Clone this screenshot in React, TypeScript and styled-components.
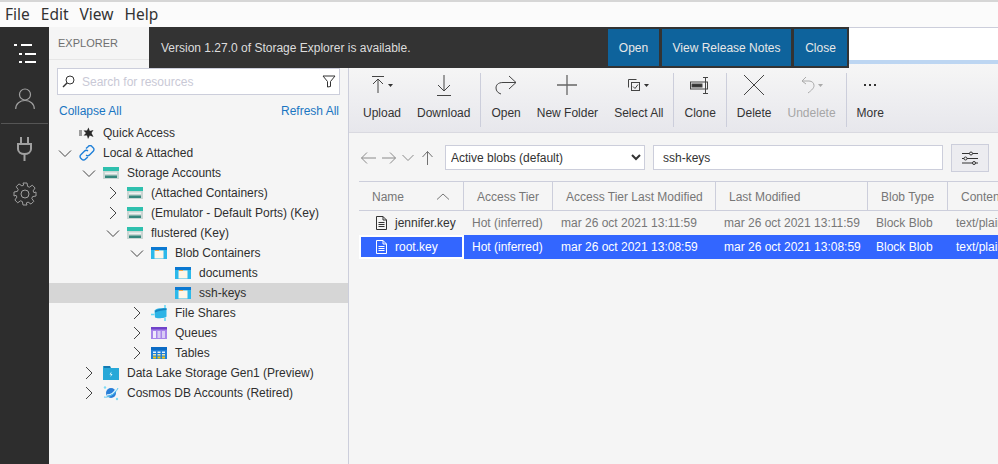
import React from "react";
import styled, { createGlobalStyle } from "styled-components";

const GlobalStyle = createGlobalStyle`
  html, body { margin: 0; padding: 0; height: 100%; overflow: hidden; }
  body { font-family: "Liberation Sans", Arial, sans-serif; font-size: 12px; color: #333; background: #f5f5f5; }
  #root { height: 100%; }
  * { box-sizing: border-box; }
`;

const COLS = "105px 89px 163px 152px 80px 120px";

const Shell = styled.div`
  width: 998px;
  height: 464px;
  position: relative;
  overflow: hidden;
  display: flex;
  flex-direction: column;
`;
const MenuBar = styled.div`
  height: 27px;
  flex: none;
  background: #fbfbfb;
  border-top: 2px solid #d6d6d6;
  display: flex;
  align-items: center;
  padding: 0 5px 1px;
  gap: 11px;
  font-family: "Noto Sans", "Open Sans", sans-serif;
  font-size: 15.5px;
  color: #333;
`;
const Body = styled.div`
  flex: 1;
  display: flex;
  min-height: 0;
`;
const ActivityBar = styled.div`
  width: 49px;
  flex: none;
  background: #2d2d2d;
  display: flex;
  flex-direction: column;
  align-items: center;
`;
const ActivitySlot = styled.div<{ $h: number }>`
  height: ${(p) => p.$h}px;
  width: 100%;
  flex: none;
  display: flex;
  align-items: center;
  justify-content: center;
`;
const ActivityRule = styled.div`
  width: 47px;
  height: 1px;
  background: #555;
  flex: none;
`;
const Explorer = styled.div`
  width: 300px;
  flex: none;
  background: #f5f5f5;
  border-right: 1px solid #cccedb;
  display: flex;
  flex-direction: column;
`;
const ExplorerTitle = styled.div`
  height: 33px;
  flex: none;
  padding: 0 0 0 9px;
  display: flex;
  align-items: center;
  font-size: 11px;
  color: #6f6f6f;
  border-bottom: 1px solid #e6e6e6;
`;
const SearchBox = styled.div`
  margin: 8px 8px 0;
  height: 27px;
  background: #fff;
  border: 1px solid #cccedb;
  display: flex;
  align-items: center;
  padding: 0 3px 0 4px;
  gap: 7px;
`;
const SearchText = styled.div`
  flex: 1;
  color: #c9c9d6;
  font-size: 12px;
`;
const LinkRow = styled.div`
  display: flex;
  justify-content: space-between;
  padding: 4px 9px 0 10px;
  height: 28px;
  align-items: center;
  color: #1a76c2;
`;
const Row = styled.div<{ $depth: number; $active?: boolean }>`
  height: 20px;
  display: flex;
  align-items: center;
  padding-left: ${(p) => 8 + p.$depth * 24}px;
  background: ${(p) => (p.$active ? "#d6d6d6" : "transparent")};
  color: #2f2f2f;
  white-space: nowrap;
`;
const Twist = styled.div`
  width: 22px;
  flex: none;
  display: flex;
  align-items: center;
  padding-left: 1px;
`;
const RowIcon = styled.div`
  width: 16px;
  height: 16px;
  flex: none;
  margin-right: 8px;
  display: flex;
`;
const Main = styled.div`
  flex: 1;
  min-width: 0;
  display: flex;
  flex-direction: column;
`;
const TabStrip = styled.div`
  height: 37px;
  flex: none;
  background: #fff;
  border-top: 1px solid #cccedb;
  border-bottom: 4px solid #bdd6f2;
`;
const Toolbar = styled.div`
  height: 69px;
  flex: none;
  background: linear-gradient(#f6f6f6, #e7e7ec);
  border-bottom: 1px solid #d9d9e0;
  padding: 4px 0 0 6px;
  display: flex;
`;
const ToolButton = styled.div<{ $off?: boolean }>`
  padding: 0 8px;
  height: 64px;
  display: flex;
  flex-direction: column;
  align-items: center;
  white-space: nowrap;
  color: ${(p) => (p.$off ? "#a6a6a6" : "#333")};
`;
const ToolIcon = styled.div`
  height: 34px;
  margin-bottom: 4px;
  display: flex;
  align-items: center;
  justify-content: center;
`;
const ToolSep = styled.div`
  width: 1px;
  height: 54px;
  margin: 5px 2px 0;
  background: #cccedb;
  flex: none;
`;
const AddressBar = styled.div`
  height: 48px;
  flex: none;
  display: flex;
  align-items: center;
  padding: 1px 9px 0 10px;
`;
const NavArrows = styled.div`
  width: 86px;
  flex: none;
  display: flex;
  align-items: center;
  gap: 6px;
  padding-left: 2px;

  svg:last-child {
    margin-left: 2px;
  }
`;
const FilterSelect = styled.select`
  width: 200px;
  height: 25px;
  flex: none;
  border: 1px solid #cccedb;
  border-radius: 0;
  background: #fff;
  color: #333;
  font: 12px "Liberation Sans", Arial, sans-serif;
  padding: 0 0 0 1px;
  margin-right: 8px;
  outline: none;
`;
const PathInput = styled.div`
  width: 290px;
  height: 25px;
  flex: none;
  border: 1px solid #cccedb;
  background: #fff;
  display: flex;
  align-items: center;
  padding-left: 9px;
  margin-right: 8px;
`;
const SettingsButton = styled.div`
  width: 38px;
  height: 28px;
  flex: none;
  background: #ececf0;
  border: 1px solid #cccedb;
  display: flex;
  align-items: center;
  justify-content: center;
`;
const Table = styled.div`
  margin-left: 10px;
  width: 709px;
`;
const HeaderRow = styled.div`
  display: grid;
  grid-template-columns: ${COLS};
  height: 30px;
  border-top: 1px solid #cccedb;
  border-bottom: 1px solid #cccedb;
`;
const HeaderCell = styled.div`
  display: flex;
  align-items: center;
  justify-content: space-between;
  padding: 1px 14px 0 13px;
  color: #777;
  white-space: nowrap;
  border-right: 1px solid #cccedb;
  &:last-child { border-right: none; }
`;
const DataRow = styled.div`
  display: grid;
  grid-template-columns: ${COLS};
  height: 24px;
  align-items: stretch;
`;
const NameCell = styled.div<{ $sel?: boolean }>`
  display: flex;
  align-items: center;
  padding-left: ${(p) => (p.$sel ? 14 : 16)}px;
  padding-bottom: ${(p) => (p.$sel ? 1 : 0)}px;
  gap: 7px;
  color: ${(p) => (p.$sel ? "#fff" : "#333")};
  background: ${(p) => (p.$sel ? "#3366ff" : "transparent")};
  border: ${(p) => (p.$sel ? "2px solid #fff" : "none")};
`;
const DataCell = styled.div<{ $sel?: boolean }>`
  display: flex;
  align-items: center;
  padding-left: 8px;
  white-space: nowrap;
  overflow: hidden;
  color: ${(p) => (p.$sel ? "#fff" : "#777")};
  background: ${(p) => (p.$sel ? "#3366ff" : "transparent")};
`;
const Notice = styled.div`
  position: absolute;
  left: 149px;
  top: 27px;
  width: 700px;
  height: 41px;
  background: #333;
  display: flex;
  align-items: center;
  padding: 0 2px 0 12px;
  color: #ddd;
`;
const NoticeText = styled.div`
  flex: 1;
`;
const NoticeButton = styled.div<{ $w: number }>`
  width: ${(p) => p.$w}px;
  height: 37px;
  margin-left: 3px;
  background: #0e639c;
  color: #e8e8e8;
  display: flex;
  align-items: center;
  justify-content: center;
`;

const Chevron = ({ open }: { open?: boolean }) => (
  <svg width="14" height="14" viewBox="0 0 14 14" fill="none" stroke="#444" strokeWidth="1">
    {open ? <path d="M1 4.5 7 10.5 13 4.5" /> : <path d="M4 1 10 7 4 13" />}
  </svg>
);

const StorageIcon = () => (
  <svg width="16" height="16" viewBox="0 0 16 16">
    <rect y="2" width="16" height="12" fill="#c9d6d3" />
    <rect y="2" width="16" height="4" fill="#2fc0ae" />
    <rect x="2" y="7.5" width="12" height="1.5" fill="#eef2f1" />
    <rect x="2" y="10.5" width="12" height="2.5" fill="#36877d" />
  </svg>
);
const BlobIcon = () => (
  <svg width="16" height="16" viewBox="0 0 16 16">
    <rect y="2" width="16" height="12" fill="#2cb9ea" />
    <rect y="2" width="16" height="3" fill="#0a78d1" />
    <rect x="3.5" y="5.5" width="9" height="8" fill="#fdf6e8" />
    <rect x="4" y="5" width="4" height="1" fill="#f0a347" />
  </svg>
);
const FileIcon = () => (
  <svg width="16" height="16" viewBox="0 0 16 16" fill="none">
    <path d="M3.5 5.5C5 3 12 3 15.5 3V11.5C15.5 13 6 14 4 12.5Z" fill="#2cb4e6" />
    <path d="M4 6C6 4 12 3.5 15.5 3.5V5C12 5 7 6 4 7.5Z" fill="#1784bf" />
    <path d="M14 0V3M14 13V16M0 9.5H3.5" stroke="#62d8f5" strokeWidth="1.5" />
  </svg>
);
const QueueIcon = () => (
  <svg width="16" height="16" viewBox="0 0 16 16">
    <rect y="2" width="16" height="12" fill="#a884ea" />
    <rect y="2" width="16" height="2.5" fill="#6f42c9" />
    <rect x="2" y="6" width="3" height="7" fill="#efe9fb" />
    <rect x="6.5" y="6" width="3" height="7" fill="#d9ccf5" />
    <rect x="11" y="6" width="3" height="7" fill="#d9ccf5" />
  </svg>
);
const TableIcon = () => (
  <svg width="16" height="16" viewBox="0 0 16 16">
    <rect y="2" width="16" height="12" fill="#1e7fd8" />
    <rect y="2" width="16" height="3" fill="#0a6ac4" />
    <path d="M2 6.5H5V8H2ZM6.5 6.5H9.5V8H6.5ZM11 6.5H14V8H11Z" fill="#e6f2fc" />
    <path d="M2 9H5V10.5H2ZM6.5 9H9.5V10.5H6.5ZM11 9H14V10.5H11Z" fill="#f3e6a6" />
    <path d="M2 11.5H5V13.5H2ZM6.5 11.5H9.5V13.5H6.5ZM11 11.5H14V13.5H11Z" fill="#f2c811" />
  </svg>
);
const LakeIcon = () => (
  <svg width="16" height="16" viewBox="0 0 16 16">
    <path d="M0 1H7L8 3H16V15H0Z" fill="#28a8d8" />
    <path d="M1 1H7L7.5 3H1Z" fill="#1678b0" />
    <path d="M8.5 6.5 6.5 9.5H8L7.5 12 9.5 9H8Z" fill="#e9fbff" />
  </svg>
);
const CosmosIcon = () => (
  <svg width="16" height="16" viewBox="0 0 16 16" fill="none">
    <circle cx="8" cy="8" r="5" fill="#2a7fd8" />
    <path d="M4 10C7 10 11 8 13 4" stroke="#d8f2ff" strokeWidth="1.3" />
    <path d="M1 12C4 13 12 10 15 3" stroke="#56c8f0" strokeWidth="1" />
    <circle cx="2" cy="2.5" r="1.2" fill="#7edcf5" />
    <circle cx="14" cy="14" r="1.2" fill="#7edcf5" />
  </svg>
);
const LinkIcon = () => (
  <svg width="16" height="16" viewBox="0 0 16 16" fill="none" stroke="#1e7fd8" strokeWidth="1.4">
    <path d="M7 3.5 9.3 1.4a2.4 2.4 0 0 1 3.6 0l1.3 1.3a2.4 2.4 0 0 1 0 3.5L10.5 10a2.4 2.4 0 0 1-3.4 0" />
    <path d="M9 6a2.4 2.4 0 0 0-3.4 0L1.8 9.8a2.4 2.4 0 0 0 0 3.5l1 1a2.4 2.4 0 0 0 3.5 0L8.8 12" />
  </svg>
);
const QuickIcon = () => (
  <svg width="16" height="16" viewBox="0 0 16 16">
    <path d="M0 6H3M0 8H3M0 10H3" stroke="#444" strokeWidth="1" />
    <path d="M9.5 2.5 10.8 6 14.5 5 12.5 8 14.5 12 10.8 10.5 9 14 8 10.5 4.5 10.5 7 8 4.5 5.5 8 5.5Z" fill="#2a2a2a" />
  </svg>
);

const Caret = () => (
  <svg width="5" height="3" viewBox="0 0 5 3" style={{ marginLeft: 4 }}>
    <path d="M0 0H5L2.5 3Z" fill="#333" />
  </svg>
);

const DocIcon = ({ color }: { color: string }) => (
  <svg width="13" height="16" viewBox="0 0 13 16" fill="none" stroke={color} strokeWidth="1">
    <path d="M1.5 1.5H8L11.5 5V14.5H1.5Z" />
    <path d="M8 1.5V5H11.5M3.5 7.5H9.5M3.5 9.5H9.5M3.5 11.5H9.5" />
  </svg>
);

type TreeItem = {
  depth: number;
  label: string;
  icon: React.ReactNode;
  twist?: "open" | "closed";
  active?: boolean;
};

const TREE: TreeItem[] = [
  { depth: 0, label: "Quick Access", icon: <QuickIcon /> },
  { depth: 0, label: "Local & Attached", icon: <LinkIcon />, twist: "open" },
  { depth: 1, label: "Storage Accounts", icon: <StorageIcon />, twist: "open" },
  { depth: 2, label: "(Attached Containers)", icon: <StorageIcon />, twist: "closed" },
  { depth: 2, label: "(Emulator - Default Ports) (Key)", icon: <StorageIcon />, twist: "closed" },
  { depth: 2, label: "flustered (Key)", icon: <StorageIcon />, twist: "open" },
  { depth: 3, label: "Blob Containers", icon: <BlobIcon />, twist: "open" },
  { depth: 4, label: "documents", icon: <BlobIcon /> },
  { depth: 4, label: "ssh-keys", icon: <BlobIcon />, active: true },
  { depth: 3, label: "File Shares", icon: <FileIcon />, twist: "closed" },
  { depth: 3, label: "Queues", icon: <QueueIcon />, twist: "closed" },
  { depth: 3, label: "Tables", icon: <TableIcon />, twist: "closed" },
  { depth: 1, label: "Data Lake Storage Gen1 (Preview)", icon: <LakeIcon />, twist: "closed" },
  { depth: 1, label: "Cosmos DB Accounts (Retired)", icon: <CosmosIcon />, twist: "closed" },
];

const BLOBS = [
  { name: "jennifer.key", date: "mar 26 oct 2021 13:11:59" },
  { name: "root.key", date: "mar 26 oct 2021 13:08:59", selected: true },
];

const thin = { fill: "none", stroke: "#444", strokeWidth: 1 };

const App = () => {
  return (
    <Shell>
      <GlobalStyle />
      <MenuBar>
        <span>File</span>
        <span>Edit</span>
        <span>View</span>
        <span>Help</span>
      </MenuBar>
      <Body>
        <ActivityBar>
          <ActivitySlot $h={54}>
            <svg width="24" height="24" viewBox="0 0 24 24" fill="#fff">
              <rect x="1" y="2" width="3" height="2" />
              <rect x="8" y="2" width="11" height="2" />
              <rect x="6" y="11" width="3" height="2" />
              <rect x="12" y="11" width="11" height="2" />
              <rect x="6" y="19" width="3" height="2" />
              <rect x="12" y="19" width="11" height="2" />
            </svg>
          </ActivitySlot>
          <ActivitySlot $h={34}>
            <svg width="20" height="21" viewBox="0 0 20 21" fill="none" stroke="#a0a0a0" strokeWidth="1.2">
              <circle cx="10" cy="6.5" r="5.5" />
              <path d="M.7 21C.7 15.5 5 12.5 10 12.5S19.3 15.5 19.3 21" />
            </svg>
          </ActivitySlot>
          <ActivitySlot $h={8} />
          <ActivityRule />
          <ActivitySlot $h={50}>
            <svg width="15" height="24" viewBox="0 0 15 24" fill="none" stroke="#a0a0a0" strokeWidth="2">
              <path d="M4 0V7M11 0V7" />
              <path d="M1 7H14V12C14 15 11 17 7.5 17S1 15 1 12Z" />
              <path d="M7.5 17V24" />
            </svg>
          </ActivitySlot>
          <ActivitySlot $h={40}>
            <svg width="24" height="24" viewBox="0 0 24 24" fill="none" stroke="#a0a0a0" strokeWidth="1">
              <circle cx="12" cy="12" r="4" />
              <path d="M10 1h4l.6 3.4 1.8.8 2.9-2 2.8 2.8-2 2.9.8 1.8L23 10v4l-3.4.6-.8 1.8 2 2.9-2.8 2.8-2.9-2-1.8.8L14 23h-4l-.6-3.4-1.8-.8-2.9 2-2.8-2.8 2-2.9-.8-1.8L1 14v-4l3.4-.6.8-1.8-2-2.9 2.8-2.8 2.9 2 1.8-.8Z" />
            </svg>
          </ActivitySlot>
        </ActivityBar>
        <Explorer>
          <ExplorerTitle>EXPLORER</ExplorerTitle>
          <SearchBox>
            <svg width="13" height="13" viewBox="0 0 13 13" fill="none" stroke="#333" strokeWidth="1">
              <circle cx="8" cy="5" r="4" />
              <path d="M5 8 1 12" strokeWidth="1.5" />
            </svg>
            <SearchText>Search for resources</SearchText>
            <svg width="14" height="13" viewBox="0 0 14 13" fill="none" stroke="#333" strokeWidth="1">
              <path d="M1 1H13L8.5 6.5V11.5L5.5 12V6.5Z" />
            </svg>
          </SearchBox>
          <LinkRow>
            <span>Collapse All</span>
            <span>Refresh All</span>
          </LinkRow>
          {TREE.map((item) => (
            <Row key={item.label} $depth={item.depth} $active={item.active}>
              <Twist>{item.twist && <Chevron open={item.twist === "open"} />}</Twist>
              <RowIcon>{item.icon}</RowIcon>
              {item.label}
            </Row>
          ))}
        </Explorer>
        <Main>
          <TabStrip />
          <Toolbar>
            <ToolButton>
              <ToolIcon>
                <svg width="12" height="18" viewBox="0 0 12 18" {...thin}>
                  <path d="M0 .5H12M6 3V17M1 8 6 3 11 8" />
                </svg>
                <Caret />
              </ToolIcon>
              Upload
            </ToolButton>
            <ToolButton>
              <ToolIcon>
                <svg width="16" height="22" viewBox="0 0 16 22" {...thin}>
                  <path d="M8 1V17M2 11 8 17 14 11M1 21.5H15" />
                </svg>
              </ToolIcon>
              Download
            </ToolButton>
            <ToolSep />
            <ToolButton>
              <ToolIcon>
                <svg width="22" height="20" viewBox="0 0 22 20" {...thin}>
                  <path d="M14 1 21 7.5 14 14M21 7.5H8C3 7.5 1 10 1 13S3 18 6 19" />
                </svg>
              </ToolIcon>
              Open
            </ToolButton>
            <ToolButton>
              <ToolIcon>
                <svg width="20" height="20" viewBox="0 0 20 20" fill="none" stroke="#666" strokeWidth="1.3">
                  <path d="M10 0V20M0 10H20" />
                </svg>
              </ToolIcon>
              New Folder
            </ToolButton>
            <ToolButton>
              <ToolIcon>
                <svg width="12" height="12" viewBox="0 0 12 12" {...thin}>
                  <path d="M.5 8.5V.5H8.5" />
                  <rect x="3.5" y="3.5" width="8" height="8" />
                  <path d="M5 7.5 7 9.5 10 5.5" />
                </svg>
                <Caret />
              </ToolIcon>
              Select All
            </ToolButton>
            <ToolSep />
            <ToolButton>
              <ToolIcon>
                <svg width="20" height="17" viewBox="0 0 20 17" fill="none" stroke="#444" strokeWidth="1">
                  <rect x=".5" y="5" width="17" height="7" />
                  <rect x="2" y="7" width="10" height="3" fill="#333" />
                  <path d="M13 .5H18M15.5 .5V16.5M13 16.5H18" />
                </svg>
              </ToolIcon>
              Clone
            </ToolButton>
            <ToolSep />
            <ToolButton>
              <ToolIcon>
                <svg width="20" height="20" viewBox="0 0 20 20" {...thin}>
                  <path d="M0 0 20 20M20 0 0 20" />
                </svg>
              </ToolIcon>
              Delete
            </ToolButton>
            <ToolButton $off>
              <ToolIcon>
                <svg width="14" height="18" viewBox="0 0 14 18" fill="none" stroke="#aaa" strokeWidth="1">
                  <path d="M5 1 1 5 5 8M1 5H8C11 5 13 7 13 9.5S11 14 7 17" />
                </svg>
                <svg width="5" height="3" viewBox="0 0 5 3" style={{ marginLeft: 3 }}>
                  <path d="M0 0H5L2.5 3Z" fill="#aaa" />
                </svg>
              </ToolIcon>
              Undelete
            </ToolButton>
            <ToolSep />
            <ToolButton>
              <ToolIcon>
                <svg width="12" height="3" viewBox="0 0 12 3" fill="#333">
                  <rect width="2" height="2" />
                  <rect x="5" width="2" height="2" />
                  <rect x="10" width="2" height="2" />
                </svg>
              </ToolIcon>
              More
            </ToolButton>
          </Toolbar>
          <AddressBar>
            <NavArrows>
              <svg width="15" height="12" viewBox="0 0 15 12" fill="none" stroke="#8a8a8a">
                <path d="M6 .5.5 6 6 11.5M.5 6H15" />
              </svg>
              <svg width="14" height="12" viewBox="0 0 14 12" fill="none" stroke="#8a8a8a">
                <path d="M8 .5 13.5 6 8 11.5M0 6H13.5" />
              </svg>
              <svg width="12" height="8" viewBox="0 0 12 8" fill="none" stroke="#8a8a8a">
                <path d="M.5 1 6 6.5 11.5 1" />
              </svg>
              <svg width="11" height="14" viewBox="0 0 11 14" fill="none" stroke="#707070">
                <path d="M.5 6 5.5 .5 10.5 6M5.5 .5V14" />
              </svg>
            </NavArrows>
            <FilterSelect defaultValue="active">
              <option value="active">Active blobs (default)</option>
            </FilterSelect>
            <PathInput>ssh-keys</PathInput>
            <SettingsButton>
              <svg width="16" height="14" viewBox="0 0 16 14" fill="none" stroke="#333">
                <path d="M0 2.5H7.5M10.5 2.5H16M0 7.5H2M5 7.5H16M0 12H10.5M13.5 12H16" />
                <circle cx="9" cy="2.5" r="1.5" />
                <circle cx="3.5" cy="7.5" r="1.5" />
                <circle cx="12" cy="12" r="1.5" />
              </svg>
            </SettingsButton>
          </AddressBar>
          <Table>
            <HeaderRow>
              <HeaderCell>
                Name
                <svg width="12" height="7" viewBox="0 0 12 7" fill="none" stroke="#777">
                  <path d="M0 6.5 6 1 12 6.5" />
                </svg>
              </HeaderCell>
              <HeaderCell>Access Tier</HeaderCell>
              <HeaderCell>Access Tier Last Modified</HeaderCell>
              <HeaderCell>Last Modified</HeaderCell>
              <HeaderCell>Blob Type</HeaderCell>
              <HeaderCell>Content Type</HeaderCell>
            </HeaderRow>
            {BLOBS.map((blob) => (
              <DataRow key={blob.name}>
                <NameCell $sel={blob.selected}>
                  <DocIcon color={blob.selected ? "#fff" : "#333"} />
                  {blob.name}
                </NameCell>
                <DataCell $sel={blob.selected}>Hot (inferred)</DataCell>
                <DataCell $sel={blob.selected}>{blob.date}</DataCell>
                <DataCell $sel={blob.selected}>{blob.date}</DataCell>
                <DataCell $sel={blob.selected}>Block Blob</DataCell>
                <DataCell $sel={blob.selected}>text/plain</DataCell>
              </DataRow>
            ))}
          </Table>
        </Main>
      </Body>
      <Notice>
        <NoticeText>Version 1.27.0 of Storage Explorer is available.</NoticeText>
        <NoticeButton $w={51}>Open</NoticeButton>
        <NoticeButton $w={129}>View Release Notes</NoticeButton>
        <NoticeButton $w={53}>Close</NoticeButton>
      </Notice>
    </Shell>
  );
};

export default App;
